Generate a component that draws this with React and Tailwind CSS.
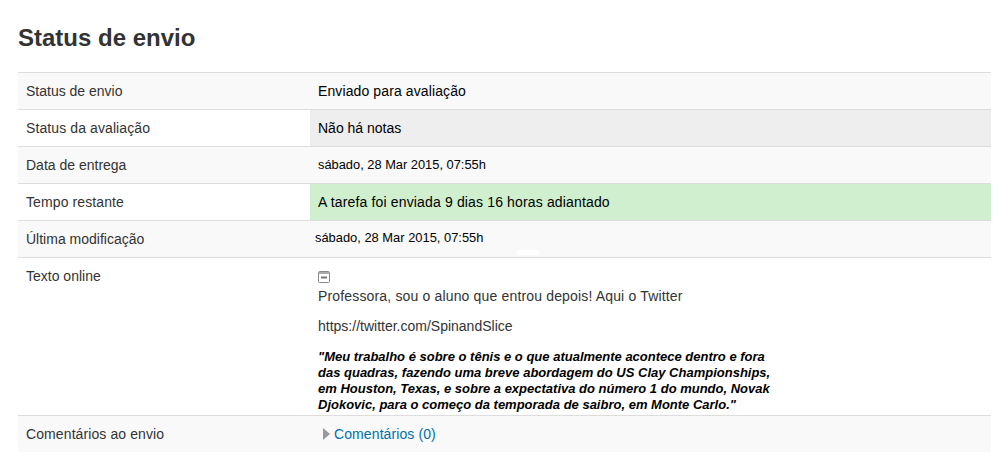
import React from "react";

const labelClass = "w-[292px] shrink-0 px-2 py-2 text-[14px] leading-[20px] text-[#333]";

function Row({ label, labelTrack, striped, cellClass, children }) {
  return (
    <div className={`flex h-[37px] border-t border-[#ddd] ${striped ? "bg-[#f9f9f9]" : "bg-white"}`}>
      <div className={`${labelClass} ${labelTrack || ""}`}>{label}</div>
      <div className={`flex-1 flex items-center px-2 text-black ${cellClass || ""}`}>{children}</div>
    </div>
  );
}

export default function App() {
  return (
    <div className="relative h-[473px] bg-white pl-[18px] pr-2 overflow-hidden font-['Liberation_Sans',Arial,sans-serif] text-[#333]">
      <h2 className="pt-[22px] h-[72px] text-[24px] leading-[32px] font-bold">Status de envio</h2>

      <div>
        <Row label="Status de envio" striped cellClass="text-[14px] tracking-[0.11px]">Enviado para avaliação</Row>
        <Row label="Status da avaliação" labelTrack="tracking-[0.1px]" cellClass="bg-[#eee] text-[14px]">Não há notas</Row>
        <Row label="Data de entrega" striped cellClass="text-[12.85px]">sábado, 28 Mar 2015, 07:55h</Row>
        <Row label="Tempo restante" labelTrack="tracking-[0.1px]" cellClass="bg-[#cfefcf] text-[14px] tracking-[0.15px]">A tarefa foi enviada 9 dias 16 horas adiantado</Row>
        <Row label="Última modificação" striped cellClass="text-[12.9px] !pl-[5px] pb-[2px]">sábado, 28 Mar 2015, 07:55h</Row>

        <div className="flex h-[158px] border-t border-[#ddd] bg-white overflow-hidden">
          <div className={labelClass}>Texto online</div>
          <div className="flex-1 px-2 pt-[13px]">
            <svg width="12" height="12" viewBox="0 0 12 12" className="block">
              <rect x="0.5" y="0.5" width="11" height="11" rx="1" fill="#fff" stroke="#888" />
              <rect x="1" y="1" width="10" height="2" fill="#aaa" />
              <rect x="3" y="5.5" width="6" height="2" fill="#777" />
            </svg>
            <p className="text-[14px] leading-[20px] mt-[3px] mb-[10px] tracking-[0.16px]">Professora, sou o aluno que entrou depois! Aqui o Twitter</p>
            <p className="text-[14px] leading-[20px] mb-[13px]">https://twitter.com/SpinandSlice</p>
            <p className="w-[460px] text-[13px] leading-[16px] font-bold italic text-black">
              "Meu trabalho é sobre o tênis e o que atualmente acontece dentro e fora das quadras, fazendo uma breve abordagem do US Clay Championships, em Houston, Texas, e sobre a expectativa do número 1 do mundo, Novak Djokovic, para o começo da temporada de saibro, em Monte Carlo."
            </p>
          </div>
        </div>

        <div className="flex h-[37px] border-t border-[#ddd] bg-[#f9f9f9]">
          <div className={`${labelClass} tracking-[0.1px]`}>Comentários ao envio</div>
          <div className="flex-1 flex items-center pl-[13px]">
            <svg width="7" height="12" viewBox="0 0 7 12" className="mr-[4px]">
              <path d="M0 0 L7 6 L0 12 Z" fill="#999" />
            </svg>
            <a className="text-[14px] tracking-[0.1px] text-[#0070a8]">Comentários (0)</a>
          </div>
        </div>
      </div>

      {/* white specks lying over the row in the capture */}
      <div className="absolute left-[517px] top-[250px] w-[22px] h-[5px] bg-white" />
      <div className="absolute left-[517px] top-[226px] w-[1px] h-[1px] bg-white" />
    </div>
  );
}
